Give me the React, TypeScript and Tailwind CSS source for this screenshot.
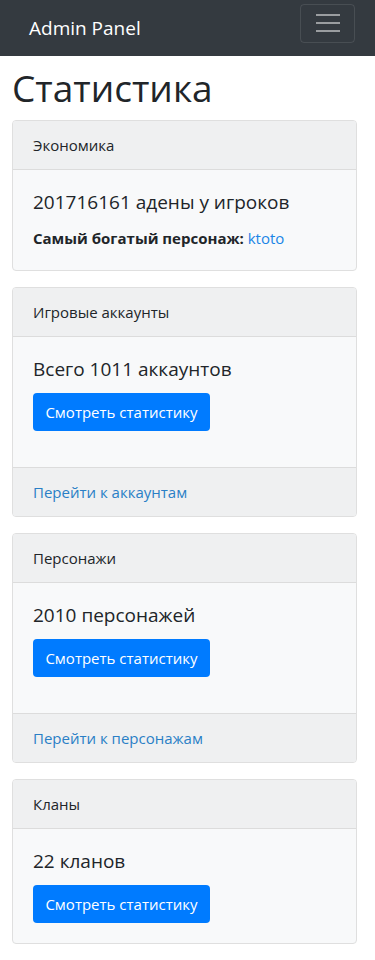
import React from "react";

type Stat = {
  title: string;
  text: string;
  button?: boolean;
  footer?: string;
};

const stats: Stat[] = [
  { title: "Игровые аккаунты", text: "Всего 1011 аккаунтов", button: true, footer: "Перейти к аккаунтам" },
  { title: "Персонажи", text: "2010 персонажей", button: true, footer: "Перейти к персонажам" },
  { title: "Кланы", text: "22 кланов", button: true },
];

function StatButton({ last }: { last?: boolean }) {
  return (
    <button
      className={
        last
          ? "h-[38px] w-[177px] rounded bg-[#007bff] text-[15px] text-white"
          : "mb-4 h-[38px] w-[177px] rounded bg-[#007bff] text-[15px] text-white"
      }
    >
      Смотреть статистику
    </button>
  );
}

export default function App() {
  return (
    <div className="min-h-[960px] bg-white text-[#212529] font-['Open_Sans',sans-serif]">
      {/* navbar */}
      <nav className="flex h-14 items-center justify-between bg-[#343a40] pl-[29px] pr-[20px]">
        <span className="text-[19px] text-white">Admin Panel</span>
        <button className="mb-[10px] flex h-[39px] w-[55px] flex-col items-center justify-center gap-[6px] rounded border border-white/10">
          <span className="h-[2px] w-6 bg-white/50" />
          <span className="h-[2px] w-6 bg-white/50" />
          <span className="h-[2px] w-6 bg-white/50" />
        </button>
      </nav>

      <main className="pl-3 pr-[18px]">
        <h1 className="mt-2 mb-2 text-[37px] leading-[48px]">Статистика</h1>

        {/* economy */}
        <div className="mb-4 overflow-hidden rounded border border-[#dfdfdf] bg-[#f8f9fa]">
          <div className="border-b border-[#dcdcdc] bg-[#eff0f1] px-5 py-3 text-[15px] leading-6">Экономика</div>
          <div className="p-5">
            <h5 className="mb-3 text-[19px] leading-6">201716161 адены у игроков</h5>
            <p className="text-[15px] leading-6">
              <b>Самый богатый персонаж:</b> <a className="text-[#1a85e6]">ktoto</a>
            </p>
          </div>
        </div>

        {stats.map((s, i) => (
          <div key={s.title} className="mb-4 overflow-hidden rounded border border-[#dfdfdf] bg-[#f8f9fa]">
            <div className="border-b border-[#dcdcdc] bg-[#eff0f1] px-5 py-3 text-[15px] leading-6">{s.title}</div>
            <div className="p-5">
              <h5 className="mb-3 text-[19px] leading-6">{s.text}</h5>
              {s.button && <StatButton last={i === stats.length - 1} />}
            </div>
            {s.footer && (
              <div className="border-t border-[#dcdcdc] bg-[#eff0f1] px-5 py-3 text-[15px] leading-6">
                <a className="text-[#2a7fc6]">{s.footer}</a>
              </div>
            )}
          </div>
        ))}
      </main>
    </div>
  );
}
